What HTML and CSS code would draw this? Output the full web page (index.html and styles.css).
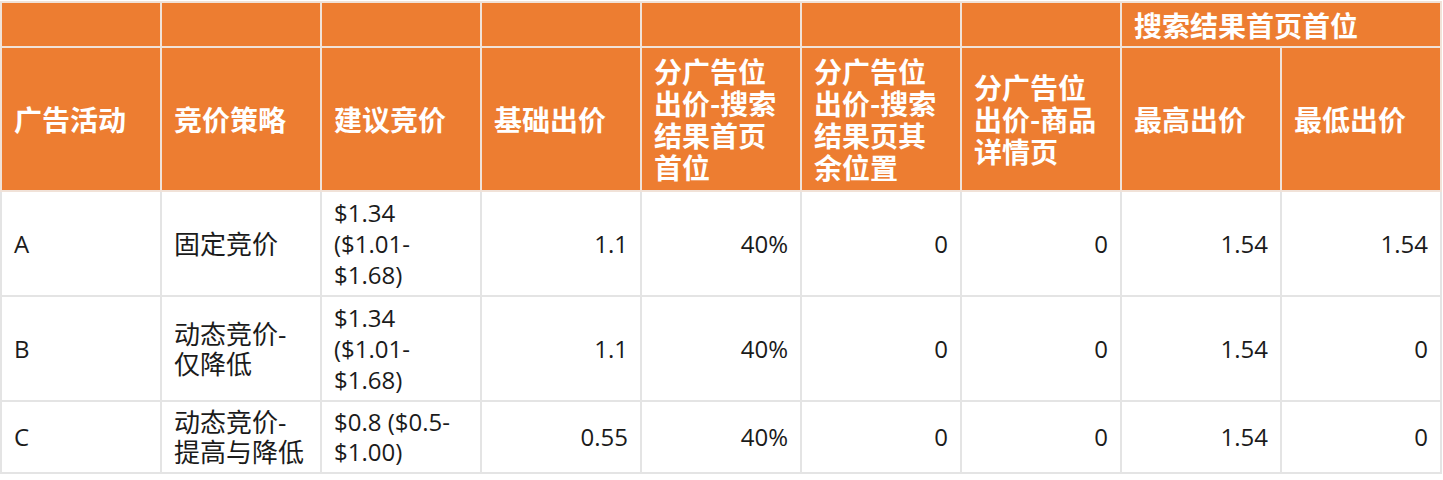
FILE: index.html
```html
<!DOCTYPE html>
<html lang="zh-CN">
<head>
<meta charset="utf-8">
<title>竞价策略</title>
<link rel="stylesheet" href="styles.css">
</head>
<body>
<table class="bid-table">
  <colgroup>
    <col class="c"><col class="c"><col class="c"><col class="c"><col class="c"><col class="c"><col class="c"><col class="c"><col class="c">
  </colgroup>
  <thead>
    <tr class="head-top">
      <th></th><th></th><th></th><th></th><th></th><th></th><th></th>
      <th colspan="2">搜索结果首页首位</th>
    </tr>
    <tr class="head-main">
      <th>广告活动</th>
      <th>竞价策略</th>
      <th>建议竞价</th>
      <th>基础出价</th>
      <th>分广告位出价-搜索结果首页首位</th>
      <th>分广告位出价-搜索结果页其余位置</th>
      <th>分广告位出价-商品详情页</th>
      <th>最高出价</th>
      <th>最低出价</th>
    </tr>
  </thead>
  <tbody>
    <tr>
      <td>A</td>
      <td class="zh">固定竞价</td>
      <td>$1.34 ($1.01-<wbr>$1.68)</td>
      <td class="num">1.1</td>
      <td class="num">40%</td>
      <td class="num">0</td>
      <td class="num">0</td>
      <td class="num">1.54</td>
      <td class="num">1.54</td>
    </tr>
    <tr>
      <td>B</td>
      <td class="zh">动态竞价-<wbr>仅降低</td>
      <td>$1.34 ($1.01-<wbr>$1.68)</td>
      <td class="num">1.1</td>
      <td class="num">40%</td>
      <td class="num">0</td>
      <td class="num">0</td>
      <td class="num">1.54</td>
      <td class="num">0</td>
    </tr>
    <tr class="compact">
      <td>C</td>
      <td class="zh">动态竞价-<wbr>提高与降低</td>
      <td>$0.8 ($0.5-<wbr>$1.00)</td>
      <td class="num">0.55</td>
      <td class="num">40%</td>
      <td class="num">0</td>
      <td class="num">0</td>
      <td class="num">1.54</td>
      <td class="num">0</td>
    </tr>
  </tbody>
</table>
</body>
</html>
```
FILE: styles.css
```css
html, body {
  margin: 0;
  padding: 0;
  background: #ffffff;
}

.bid-table {
  border-collapse: collapse;
  table-layout: fixed;
  width: 1442px;
  margin: 1px 0 0 0;
  font-family: "Open Sans", "Noto Sans CJK SC", sans-serif;
  font-size: 24px;
  line-height: 31px;
  color: #1b1b1b;
}

.bid-table .c {
  width: 160px;
}

.bid-table th,
.bid-table td {
  border: 2px solid #e4e4e4;
  padding: 5px 12px;
  text-align: left;
  vertical-align: middle;
}

.bid-table th {
  background: #ed7d31;
  color: #ffffff;
  font-family: "Noto Sans CJK SC", "Open Sans", sans-serif;
  font-weight: 700;
  font-size: 28px;
  line-height: 32px;
  border-color: #f1e2d8;
}

.head-top th {
  padding: 6px 12px 5px;
}

.head-main th {
  padding: 7px 12px;
}

.bid-table td.zh {
  font-size: 26px;
  line-height: 30px;
}

.bid-table td.num {
  text-align: right;
}

.compact td {
  line-height: 30px;
}
```
